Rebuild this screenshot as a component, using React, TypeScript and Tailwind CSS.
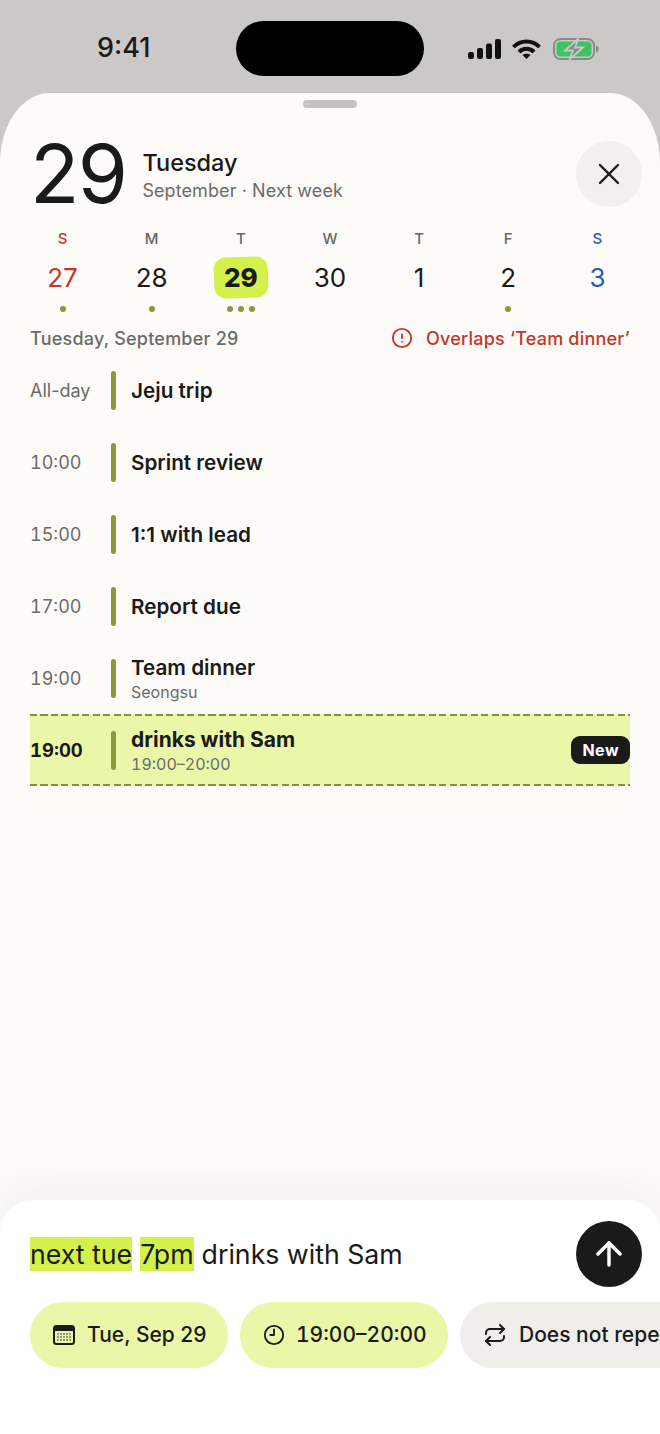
import { ArrowUp, CircleAlert, Clock9, Repeat, X } from 'lucide-react';

const days = [
  { label: 'S', num: '27', labelClass: 'text-[#c2362b]', numClass: 'text-[#c2362b]', dots: 1 },
  { label: 'M', num: '28', labelClass: 'text-[#666663]', numClass: 'text-[#1a1a18]', dots: 1 },
  { label: 'T', num: '29', labelClass: 'text-[#666663]', numClass: 'text-[#1a1a18]', dots: 3, today: true },
  { label: 'W', num: '30', labelClass: 'text-[#666663]', numClass: 'text-[#1a1a18]', dots: 0 },
  { label: 'T', num: '1', labelClass: 'text-[#666663]', numClass: 'text-[#1a1a18]', dots: 0 },
  { label: 'F', num: '2', labelClass: 'text-[#666663]', numClass: 'text-[#1a1a18]', dots: 1 },
  { label: 'S', num: '3', labelClass: 'text-[#2a5db0]', numClass: 'text-[#2a5db0]', dots: 0 },
];

const events = [
  { time: 'All-day', title: 'Jeju trip' },
  { time: '10:00', title: 'Sprint review' },
  { time: '15:00', title: '1:1 with lead' },
  { time: '17:00', title: 'Report due' },
  { time: '19:00', title: 'Team dinner', sub: 'Seongsu' },
];

function StatusIcons() {
  return (
    <div className="flex items-center">
      <svg width="34" height="20" viewBox="0 0 34 20" fill="#111">
        <rect x="0" y="13" width="6" height="7" rx="2" />
        <rect x="9" y="9" width="6" height="11" rx="2" />
        <rect x="18" y="4.5" width="6" height="15.5" rx="2" />
        <rect x="27" y="0" width="6" height="20" rx="2" />
      </svg>
      <svg width="29" height="20" viewBox="0 0 29 20" fill="none" stroke="#111" strokeWidth="4" className="ml-[10px]">
        <path d="M1.5 8 C8.5 0.5 20.5 0.5 27.5 8" />
        <path d="M7 13 C11 8.8 18 8.8 22 13" />
        <path d="M14.5 20 L10.5 16 C12.5 14.2 16.5 14.2 18.5 16 Z" fill="#111" stroke="none" />
      </svg>
      <svg width="46" height="22" viewBox="0 0 46 22" className="ml-[12px]">
        <rect x="1" y="1" width="40" height="20" rx="6.5" fill="none" stroke="#8a8a88" strokeWidth="2" />
        <rect x="3.5" y="3.5" width="35" height="15" rx="4" fill="#3cc45f" />
        <path d="M43 7.5 C45 8 45.8 9.5 45.8 11 C45.8 12.5 45 14 43 14.5 Z" fill="#8a8a88" />
        <path d="M25.5 0.5 L12 12.5 H20 L16.5 21.5 L30 9.5 H22 Z" fill="#8a8a88" stroke="#cbc9c7" strokeWidth="1.8" />
      </svg>
    </div>
  );
}

function CalendarIcon() {
  return (
    <svg width="22" height="20" viewBox="0 0 22 20">
      <rect x="1" y="1" width="20" height="18" rx="2.5" fill="none" stroke="#1a1a18" strokeWidth="2" />
      <rect x="1" y="1" width="20" height="5" fill="#1a1a18" />
      {[5, 8, 11, 14, 17].map((x) =>
        [9, 12, 15].map((y) => <rect key={`${x}-${y}`} x={x - 0.75} y={y - 0.75} width="1.5" height="1.5" fill="#55554f" />)
      )}
    </svg>
  );
}

function DashLine() {
  return <div className="h-[2px] bg-[repeating-linear-gradient(90deg,#84913f_0_7px,transparent_7px_10.5px)]" />;
}

export default function App() {
  return (
    <div className="w-[660px] h-[1434px] overflow-hidden flex flex-col bg-[#cbc9c7] font-['Inter',sans-serif] text-[#1a1a18]">
      <div className="h-[93px] shrink-0 flex items-start">
        <div className="w-[236px] pt-[32px] pl-[97px] text-[27px] leading-[32px] font-medium">9:41</div>
        <div className="mt-[21px] w-[188px] h-[55px] rounded-[28px] bg-black" />
        <div className="pt-[38px] pl-[44px]">
          <StatusIcons />
        </div>
      </div>

      <div className="flex-1 min-h-0 flex flex-col bg-[#fcfbf8] rounded-t-[50px_70px]">
        <div className="flex justify-center pt-[7px]">
          <div className="w-[54px] h-[8px] rounded-full bg-[#c4c3c0]" />
        </div>

        <div className="flex items-center pl-[30px] pr-[18px] mt-[26px] h-[80px]">
          <div className="text-[81px] leading-[80px] font-normal tracking-[-0.02em]">29</div>
          <div className="ml-[16px] flex-1 pt-[4px]">
            <div className="text-[23.5px] leading-[30px] font-medium">Tuesday</div>
            <div className="text-[18px] leading-[26px] tracking-[0.005em] text-[#6b6b68]">September · Next week</div>
          </div>
          <div className="w-[66px] h-[66px] rounded-full bg-[#f1f0ec] flex items-center justify-center">
            <X size={36} strokeWidth={1.6} />
          </div>
        </div>

        <div className="grid grid-cols-7 px-[18px] mt-[15px]">
          {days.map((d, i) => (
            <div key={i} className="flex flex-col items-center">
              <div className={`text-[15px] leading-[20px] font-medium ${d.labelClass}`}>{d.label}</div>
              <div className="relative h-[41px] w-[54px] mt-[8px] flex items-center justify-center">
                {d.today && <div className="absolute inset-0 rounded-[12px] bg-[#d4f04a] -rotate-2" />}
                <span className={`relative text-[26px] ${d.today ? 'font-extrabold' : 'font-normal'} ${d.numClass}`}>{d.num}</span>
              </div>
              <div className="flex gap-[5px] h-[6px] mt-[8px]">
                {Array.from({ length: d.dots }).map((_, j) => (
                  <div key={j} className="w-[6px] h-[6px] rounded-full bg-[#8a9a3a]" />
                ))}
              </div>
            </div>
          ))}
        </div>

        <div className="flex items-center justify-between px-[30px] mt-[13px] h-[26px]">
          <div className="text-[18px] font-medium tracking-[0.012em] text-[#6b6b68]">Tuesday, September 29</div>
          <div className="flex items-center gap-[13px] text-[#c2362b]">
            <CircleAlert size={22} strokeWidth={2} />
            <span className="text-[18px] font-medium tracking-[0.012em]">Overlaps ‘Team dinner’</span>
          </div>
        </div>

        <div className="px-[30px] mt-[3px]">
          {events.map((e) => (
            <div key={e.title} className="h-[72px] flex items-center">
              <div className={`w-[81px] pt-[1px] text-[18px] text-[#6b6b68] ${e.time === 'All-day' ? '' : 'tabular-nums'}`}>{e.time}</div>
              <div className="w-[5px] h-[39px] rounded-full bg-[#8a9a3a]" />
              <div className="ml-[15px] pt-[1px]">
                <div className="text-[20.7px] leading-[26px] font-semibold">{e.title}</div>
                {e.sub && <div className="text-[16px] leading-[22px] text-[#6b6b68]">{e.sub}</div>}
              </div>
            </div>
          ))}
          <div className="h-[72px] flex flex-col bg-[#eaf6a8]">
            <DashLine />
            <div className="flex-1 flex items-center">
              <div className="w-[81px] pt-[1px] text-[18.5px] tabular-nums font-bold">19:00</div>
              <div className="w-[5px] h-[39px] rounded-full bg-[#8a9a3a]" />
              <div className="ml-[15px] pt-[1px] flex-1">
                <div className="text-[21px] leading-[26px] font-bold">drinks with Sam</div>
                <div className="text-[16px] leading-[22px] tabular-nums text-[#6b6b68]">19:00–20:00</div>
              </div>
              <div className="h-[28px] px-[11px] rounded-[9px] bg-[#1a1a18] text-white text-[16px] tracking-[0.03em] font-bold flex items-center">New</div>
            </div>
            <DashLine />
          </div>
        </div>

        <div className="mt-auto h-[234px] shrink-0 bg-white rounded-t-[32px] shadow-[0_-16px_32px_rgba(0,0,0,0.04)] pt-[21px] overflow-hidden">
          <div className="flex items-center justify-between pl-[30px] pr-[18px]">
            <div className="text-[26.7px] leading-[34px] flex gap-[8px]">
              <span className="bg-[#d4f04a]">next tue</span>
              <span className="bg-[#d4f04a]">7pm</span>
              <span>drinks with Sam</span>
            </div>
            <div className="w-[66px] h-[66px] rounded-full bg-[#1a1a18] text-white flex items-center justify-center">
              <ArrowUp size={38} strokeWidth={2.2} />
            </div>
          </div>
          <div className="flex gap-[12px] pl-[30px] mt-[15px] text-[21px] font-medium whitespace-nowrap">
            <div className="h-[66px] w-[198px] shrink-0 rounded-full bg-[#eaf6a8] flex items-center pl-[23px] gap-[12px]">
              <CalendarIcon />
              <span>Tue, Sep 29</span>
            </div>
            <div className="h-[66px] w-[208px] shrink-0 rounded-full bg-[#eaf6a8] flex items-center pl-[23px] gap-[11px]">
              <Clock9 size={22} strokeWidth={2} />
              <span className="tabular-nums">19:00–20:00</span>
            </div>
            <div className="h-[66px] w-[260px] shrink-0 rounded-full bg-[#efeeea] flex items-center pl-[23px] gap-[12px]">
              <Repeat size={24} strokeWidth={2} />
              <span>Does not repeat</span>
            </div>
          </div>
        </div>
      </div>
    </div>
  );
}
